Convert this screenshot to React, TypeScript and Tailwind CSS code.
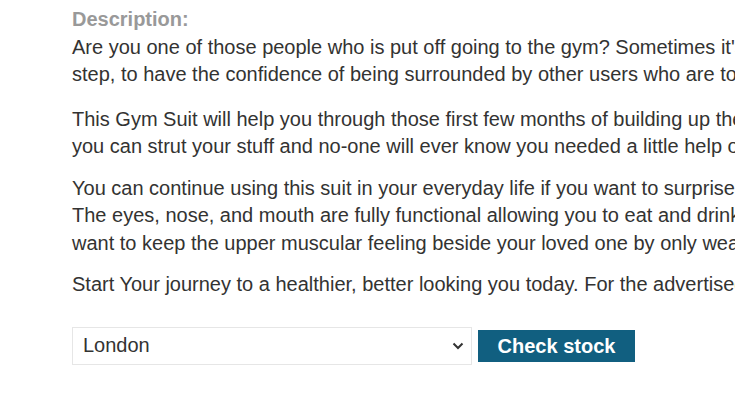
import React from "react";

const lines1 = [
  "Are you one of those people who is put off going to the gym? Sometimes it's just the first step that is the hardest,",
  "step, to have the confidence of being surrounded by other users who are too busy working out to even notice you.",
];
const lines2 = [
  "This Gym Suit will help you through those first few months of building up the muscle you need, so that",
  "you can strut your stuff and no-one will ever know you needed a little help on the way.",
];
const lines3 = [
  "You can continue using this suit in your everyday life if you want to surprise your friends and family.",
  "The eyes, nose, and mouth are fully functional allowing you to eat and drink while wearing it. You might",
  "want to keep the upper muscular feeling beside your loved one by only wearing the top half at night.",
];
const lines4 = [
  "Start Your journey to a healthier, better looking you today. For the advertised results keep working out.",
];

function Para({ lines, className = "" }: { lines: string[]; className?: string }) {
  return (
    <p className={className}>
      {lines.map((l, i) => (
        <span key={i} className="block whitespace-nowrap">
          {l}
        </span>
      ))}
    </p>
  );
}

export default function App() {
  return (
    <div
      className="w-[735px] h-[414px] overflow-hidden bg-white text-[#333332]"
      style={{ fontFamily: '"Liberation Sans", Arial, sans-serif' }}
    >
      <div className="pl-[72px] pt-[6px] w-[1400px] text-[20px] leading-[27.5px]">
        <h3 className="font-bold text-[#999999] text-[20px] leading-[27.5px]">Description:</h3>
        <Para lines={lines1} />
        <Para lines={lines2} className="mt-[17px]" />
        <Para lines={lines3} className="mt-[14px]" />
        <Para lines={lines4} className="mt-[14px]" />
        <form className="mt-[28px] flex items-center gap-[6px]">
          <div className="relative w-[400px] h-[38px]">
            <select
              defaultValue="1"
              className="w-full h-full appearance-none border border-[#e6e6e6] bg-white pl-[10px] text-[20px] text-[#333332] outline-none"
              style={{ fontFamily: '"Liberation Sans", Arial, sans-serif' }}
            >
              <option value="1">London</option>
              <option value="2">Paris</option>
              <option value="3">Milan</option>
            </select>
            <svg
              className="pointer-events-none absolute right-[8px] top-[15px]"
              width="12"
              height="8"
              viewBox="0 0 12 8"
            >
              <path d="M1.5 1.5 L6 6 L10.5 1.5" fill="none" stroke="#333" strokeWidth="2" />
            </svg>
          </div>
          <button
            type="button"
            className="w-[157px] h-[32px] mt-[1px] bg-[#115f80] text-white font-bold text-[20px] leading-[32px]"
          >
            Check stock
          </button>
        </form>
      </div>
    </div>
  );
}
